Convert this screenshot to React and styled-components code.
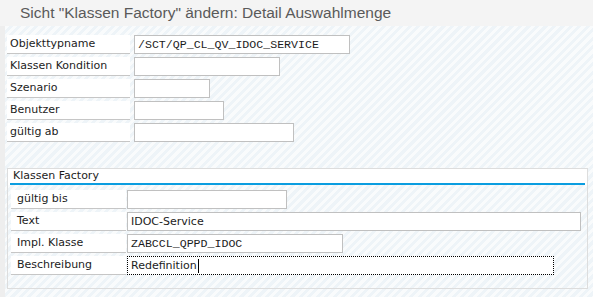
import React from "react";
import styled, { createGlobalStyle } from "styled-components";

const GlobalStyle = createGlobalStyle`
  html, body {
    margin: 0;
    padding: 0;
    background: #f2f2f2;
  }
  body {
    font-family: "DejaVu Sans", "Noto Sans", sans-serif;
    color: #1c1c1c;
  }
`;

const topFields = [
  { label: "Objekttypname", width: 216, value: "/SCT/QP_CL_QV_IDOC_SERVICE", mono: true },
  { label: "Klassen Kondition", width: 146 },
  { label: "Szenario", width: 76 },
  { label: "Benutzer", width: 90 },
  { label: "gültig ab", width: 160 },
];

const factoryFields = [
  { label: "gültig bis", width: 160 },
  { label: "Text", width: 454, value: "IDOC-Service" },
  { label: "Impl. Klasse", width: 216, value: "ZABCCL_QPPD_IDOC", mono: true },
  { label: "Beschreibung", width: 427, value: "Redefinition", focus: true },
];

const App = () => {
  return (
    <>
      <GlobalStyle />
      <Page>
        <TitleBar>Sicht "Klassen Factory" ändern: Detail Auswahlmenge</TitleBar>
        <Main>
          <Content>
            <FieldList>
              {topFields.map((f) => (
                <Row key={f.label}>
                  <Label $width={123}>{f.label}</Label>
                  <Input $width={f.width} $mono={f.mono} $gap={4}>
                    {f.value}
                  </Input>
                </Row>
              ))}
            </FieldList>

            <GroupBox>
              <GroupHeader>Klassen Factory</GroupHeader>
              <GroupBody>
                {factoryFields.map((f) => (
                  <Row key={f.label}>
                    <Label $width={115} $indent={6}>
                      {f.label}
                    </Label>
                    <Input
                      $width={f.width}
                      $mono={f.mono}
                      $focus={f.focus}
                      $gap={1}
                    >
                      {f.value}
                      {f.focus && <Caret />}
                    </Input>
                  </Row>
                ))}
              </GroupBody>
            </GroupBox>
          </Content>
        </Main>
      </Page>
    </>
  );
};

export default App;

// Styled Components

const Page = styled.div`
  width: 593px;
  height: 297px;
  overflow: hidden;
  display: flex;
  flex-direction: column;
`;

const TitleBar = styled.div`
  height: 26px;
  line-height: 25px;
  padding-left: 20px;
  font-family: "Liberation Sans", Arial, sans-serif;
  font-size: 15.5px;
  color: #5a5a5a;
  background: #f4f4f4;
  white-space: nowrap;
`;

const Main = styled.div`
  flex: 1;
  display: flex;
  border-left: 5px solid #eeeeee;
  background: repeating-linear-gradient(
    135deg,
    #f9fbfc 0px,
    #f9fbfc 3px,
    #eef4f8 3px,
    #eef4f8 6px
  );
`;

const Content = styled.div`
  flex: 1;
  padding: 9px 0 0 2px;
`;

const FieldList = styled.div`
  display: flex;
  flex-direction: column;
  gap: 3px;
`;

const Row = styled.div`
  display: flex;
  align-items: stretch;
  height: 19px;
`;

const Label = styled.div`
  box-sizing: border-box;
  width: ${(p) => p.$width}px;
  padding-left: ${(p) => p.$indent || 3}px;
  background: #ffffff;
  border-bottom: 1px solid #c6c6c6;
  font-size: 11px;
  line-height: 18px;
  white-space: nowrap;
`;

const Input = styled.div`
  box-sizing: border-box;
  position: relative;
  width: ${(p) => p.$width}px;
  margin-left: ${(p) => p.$gap}px;
  padding-left: 3px;
  background: #ffffff;
  border: 1px ${(p) => (p.$focus ? "dotted #000000" : "solid #c0c0c0")};
  font-family: ${(p) =>
    p.$mono ? '"Liberation Mono", monospace' : '"DejaVu Sans", sans-serif'};
  font-size: ${(p) => (p.$mono ? "11.6px" : "11px")};
  line-height: 17px;
  white-space: nowrap;
  display: flex;
  align-items: center;
`;

const Caret = styled.span`
  display: inline-block;
  width: 1px;
  height: 14px;
  margin-left: 1px;
  background: #000000;
`;

const GroupBox = styled.div`
  box-sizing: border-box;
  width: 581px;
  margin-top: 26px;
  border: 1px solid #dddddd;
  padding-bottom: 13px;
`;

const GroupHeader = styled.div`
  height: 14px;
  margin: 0 2px;
  padding-left: 3px;
  background: #ffffff;
  border-bottom: 2px solid #0a9de0;
  font-size: 11px;
  line-height: 14px;
  box-shadow: -2px 0 0 #ffffff, 2px 0 0 #ffffff;
`;

const GroupBody = styled.div`
  display: flex;
  flex-direction: column;
  gap: 3px;
  padding: 5px 0 0 3px;
`;
